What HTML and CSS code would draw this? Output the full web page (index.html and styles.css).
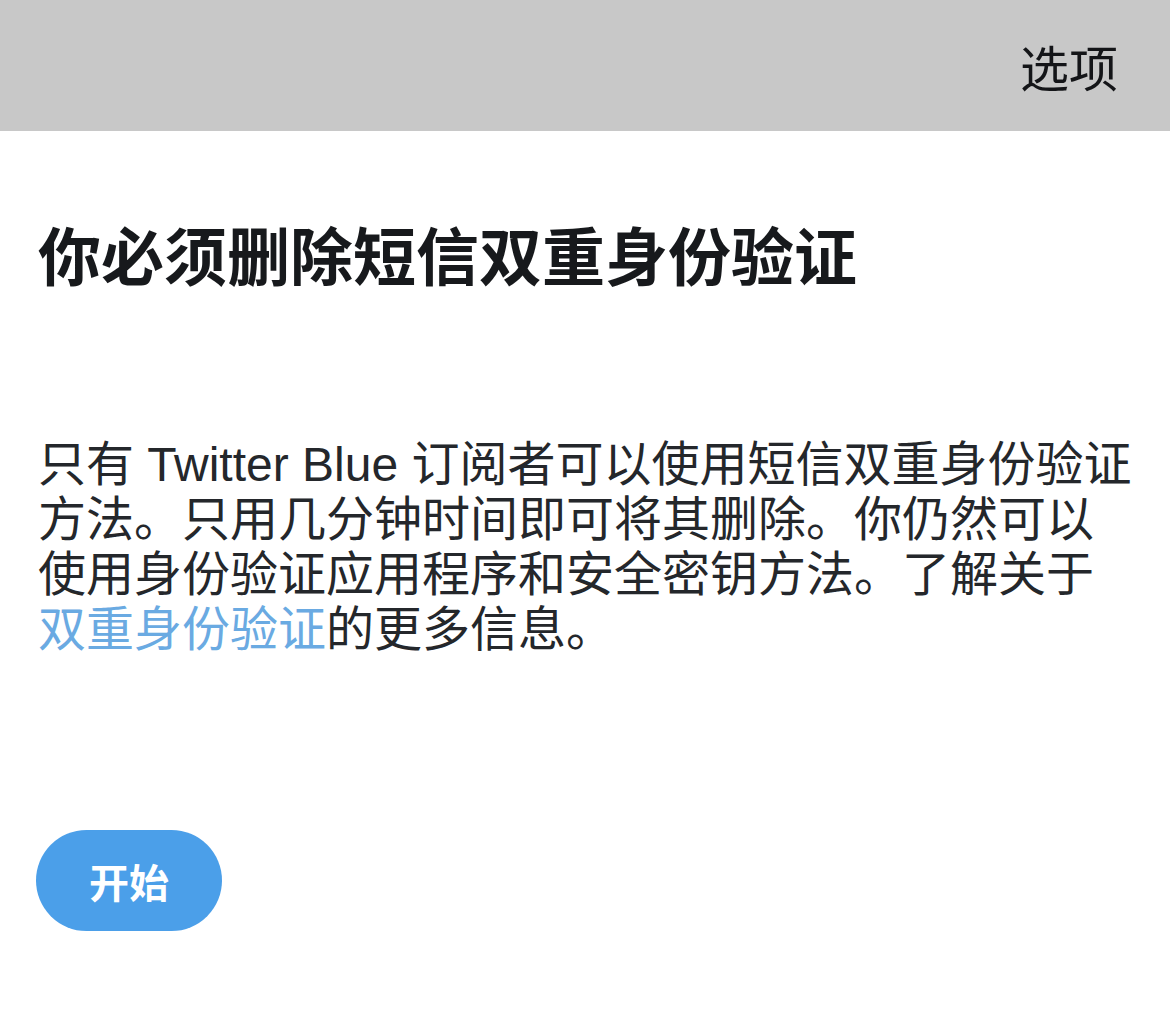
FILE: index.html
```html
<!DOCTYPE html>
<html lang="zh-CN">
<head>
<meta charset="utf-8">
<title>双重身份验证</title>
<link rel="stylesheet" href="styles.css">
</head>
<body>
  <header class="topbar">
    <span class="topbar-action">选项</span>
  </header>
  <main class="content">
    <h1 class="title">你必须删除短信双重身份验证</h1>
    <p class="desc">只有 Twitter Blue 订阅者可以使用短信双重身份验证方法。只用几分钟时间即可将其删除。你仍然可以使用身份验证应用程序和安全密钥方法。了解关于<a class="link" href="#">双重身份验证</a>的更多信息。</p>
    <button class="start-btn" type="button">开始</button>
  </main>
</body>
</html>
```

FILE: styles.css
```css
html, body {
  margin: 0;
  padding: 0;
  background: #ffffff;
}

body {
  font-family: "Liberation Sans", "Noto Sans CJK SC", sans-serif;
  color: #1f2226;
}

.topbar {
  height: 131px;
  background: #c8c8c8;
  display: flex;
  align-items: center;
  justify-content: flex-end;
  padding-right: 52px;
}

.topbar-action {
  font-family: "Noto Sans CJK SC", sans-serif;
  font-size: 49px;
  line-height: 1;
  color: #141518;
}

.content {
  padding: 0 38px;
  display: flex;
  flex-direction: column;
  align-items: flex-start;
}

.title {
  margin: 85px 0 0;
  font-family: "Noto Sans CJK SC", sans-serif;
  font-size: 63px;
  line-height: 74px;
  font-weight: 700;
  color: #17191c;
}

.desc {
  margin: 147px 0 0;
  font-size: 48px;
  line-height: 55px;
  color: #24272b;
  width: 1097px;
}

.link {
  color: #6aaae2;
  text-decoration: none;
}

.start-btn {
  margin: 173px 0 0 -2px;
  width: 186px;
  height: 101px;
  border: none;
  border-radius: 51px;
  background: #4b9fe9;
  color: #ffffff;
  font-family: "Noto Sans CJK SC", sans-serif;
  font-size: 40px;
  font-weight: 700;
  cursor: pointer;
}
```
